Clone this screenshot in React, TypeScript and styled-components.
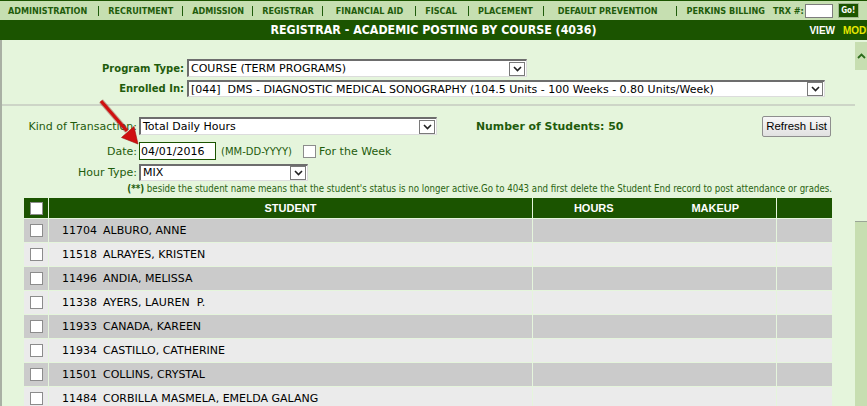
import styled, { createGlobalStyle } from "styled-components";

const DARK = "#1b5400";
const PAGE = "#e5f5dc";
const NAVBG = "#c6dfb1";
const LABEL = "#1f5c0c";

const GlobalStyle = createGlobalStyle`
  html, body { margin: 0; padding: 0; }
  body {
    width: 867px;
    height: 406px;
    overflow: hidden;
    background: ${PAGE};
    font-family: "DejaVu Sans", Verdana, sans-serif;
  }
`;

const navItems = [
  { label: "ADMINISTRATION", lead: 0, trail: 11 },
  { label: "RECRUITMENT", lead: 9, trail: 9 },
  { label: "ADMISSION", lead: 9, trail: 8 },
  { label: "REGISTRAR", lead: 9, trail: 8 },
  { label: "FINANCIAL AID", lead: 13, trail: 12 },
  { label: "FISCAL", lead: 9, trail: 11 },
  { label: "PLACEMENT", lead: 9, trail: 10 },
  { label: "DEFAULT PREVENTION", lead: 14, trail: 18 },
  { label: "PERKINS BILLING", lead: 10, trail: 8 },
];

const students = [
  ["11704", "ALBURO, ANNE"],
  ["11518", "ALRAYES, KRISTEN"],
  ["11496", "ANDIA, MELISSA"],
  ["11338", "AYERS, LAUREN  P."],
  ["11933", "CANADA, KAREEN"],
  ["11934", "CASTILLO, CATHERINE"],
  ["11501", "COLLINS, CRYSTAL"],
  ["11484", "CORBILLA MASMELA, EMELDA GALANG"],
];

const Page = styled.div`
  display: flex;
  flex-direction: column;
  height: 406px;
`;

const TopNav = styled.nav`
  display: flex;
  align-items: center;
  height: 19px;
  border-top: 1px solid ${DARK};
  background: ${NAVBG};
  padding-left: 8px;
  font-family: "DejaVu Sans Condensed", "DejaVu Sans", sans-serif;
  font-stretch: condensed;
  font-weight: bold;
  font-size: 9px;
  color: ${LABEL};
  white-space: nowrap;
`;

const NavItem = styled.span<{ $lead: number; $trail: number }>`
  padding-left: ${(p) => p.$lead}px;
  padding-right: ${(p) => p.$trail}px;
`;

const Divider = styled.span`
  width: 1px;
  height: 10px;
  background: ${LABEL};
`;

const TrxInput = styled.div`
  width: 28px;
  height: 14px;
  box-sizing: border-box;
  margin-left: 1px;
  background: #fff;
  border: 1px solid #7d7d7d;
`;

const GoButton = styled.div`
  width: 21px;
  height: 15px;
  box-sizing: border-box;
  margin-left: 5px;
  background: ${DARK};
  border: 1px solid #9fb890;
  color: #fff;
  font-size: 8px;
  display: flex;
  align-items: center;
  justify-content: center;
`;

const TitleBar = styled.header`
  display: grid;
  grid-template-columns: 1fr auto 1fr;
  align-items: center;
  height: 20px;
  background: ${DARK};
  overflow: hidden;
`;

const Title = styled.h1`
  grid-column: 2;
  margin: 0;
  font-family: "DejaVu Sans Condensed", "DejaVu Sans", sans-serif;
  font-stretch: condensed;
  font-size: 12.3px;
  font-weight: bold;
  color: #fff;
  white-space: nowrap;
`;

/* the reference window clips the right end of "MODE" */
const ViewMode = styled.div`
  justify-self: end;
  display: flex;
  gap: 8px;
  margin-right: -6px;
  font-family: "Liberation Sans", Arial, sans-serif;
  font-weight: bold;
  font-size: 10px;
  color: #fff;
`;

const Mode = styled.span`
  color: #e8e800;
`;

const Body = styled.div`
  flex: 1;
  display: flex;
  min-height: 0;
`;

const Main = styled.main`
  position: relative;
  flex: 1;
  border-left: 2px solid #a9b0a4;
  overflow: hidden;
`;

const ProgramForm = styled.div`
  display: grid;
  grid-template-columns: 182px auto;
  column-gap: 3px;
  row-gap: 3px;
  padding-top: 19px;
  justify-content: start;
`;

const BoldLabel = styled.label`
  align-self: center;
  text-align: right;
  font-weight: bold;
  font-size: 10px;
  color: ${LABEL};
`;

const Rule = styled.hr`
  margin: 7px 0 0;
  height: 2px;
  border: 0;
  background: #cdd5c7;
`;

const PostingForm = styled.div`
  display: flex;
  flex-direction: column;
  padding: 11px 24px 0 0;
`;

const FieldRow = styled.div<{ $top: number }>`
  display: flex;
  align-items: center;
  margin-top: ${(p) => p.$top}px;
  height: 18px;
`;

const FieldLabel = styled.label`
  width: 135px;
  margin-right: 2px;
  text-align: right;
  font-size: 11px;
  color: ${LABEL};
`;

const SelectBox = styled.div<{ $w: number; $h?: number }>`
  width: ${(p) => p.$w}px;
  height: ${(p) => p.$h ?? 18}px;
  box-sizing: border-box;
  display: flex;
  align-items: center;
  background: #fff;
  border-top: 2px solid #6d6d6d;
  border-left: 2px solid #6d6d6d;
  border-right: 1px solid #dcdcdc;
  border-bottom: 1px solid #dcdcdc;
`;

const SelectText = styled.span`
  flex: 1;
  padding-left: 2px;
  font-size: 11px;
  color: #000;
  white-space: pre;
  overflow: hidden;
`;

const DropButton = styled.span`
  width: 16px;
  height: 14px;
  box-sizing: border-box;
  margin-right: 1px;
  display: flex;
  align-items: center;
  justify-content: center;
  background: #fff;
  border: 1px solid #7a7a7a;
`;

const StudentCount = styled.span`
  margin-left: 39px;
  font-weight: bold;
  font-size: 10.9px;
  color: ${LABEL};
`;

const RefreshButton = styled.button`
  margin-left: auto;
  height: 21px;
  padding: 0 3px;
  background: linear-gradient(#f7f7f7, #e1e1e1);
  border: 1px solid #8e8e8e;
  border-radius: 2px;
  font-family: "Liberation Sans", Arial, sans-serif;
  font-size: 11.4px;
  color: #000;
`;

const DateInput = styled.div`
  width: 77px;
  height: 18px;
  box-sizing: border-box;
  display: flex;
  align-items: center;
  padding-left: 1px;
  background: #fff;
  border: 1px solid ${DARK};
  font-size: 11px;
`;

const Hint = styled.span`
  margin-left: 5px;
  font-size: 10px;
  color: ${LABEL};
`;

const Check = styled.span<{ $gap?: number }>`
  width: 13px;
  height: 13px;
  box-sizing: border-box;
  margin-left: ${(p) => p.$gap ?? 0}px;
  background: #fff;
  border: 1px solid #8c8c8c;
`;

const WeekLabel = styled.span`
  margin-left: 3px;
  font-size: 11px;
  color: ${LABEL};
`;

const Note = styled.p`
  margin: 2px 0 0;
  padding-right: 23px;
  line-height: 12px;
  text-align: right;
  font-family: "DejaVu Sans Condensed", "DejaVu Sans", sans-serif;
  font-stretch: condensed;
  font-size: 9.6px;
  color: #2a6312;
  white-space: nowrap;
`;

const Stars = styled.b`
  color: ${LABEL};
`;

const Grid = styled.div`
  display: grid;
  grid-template-columns: 24px 483px 243px 55px;
  grid-auto-rows: 23px;
  grid-template-rows: 20px;
  gap: 1px;
  margin: 3px 0 0 22px;
  width: max-content;
`;

const HeadCell = styled.div`
  display: flex;
  align-items: center;
  justify-content: center;
  background: ${DARK};
  font-family: "Liberation Sans", Arial, sans-serif;
  font-weight: bold;
  font-size: 11px;
  color: #fff;
`;

const HeadHalf = styled.span`
  flex: 1;
  text-align: center;
`;

const Cell = styled.div<{ $odd: boolean }>`
  display: flex;
  align-items: center;
  background: ${(p) => (p.$odd ? "#cbcbcb" : "#ebebeb")};
`;

const CheckCell = styled(Cell)`
  justify-content: center;
`;

const NameCell = styled(Cell)`
  padding-left: 13px;
  font-size: 11px;
  color: #000;
  white-space: pre;
`;

const StudentId = styled.span`
  margin-right: 6px;
`;

const Arrow = styled.svg`
  position: absolute;
  left: 93px;
  top: 58px;
  overflow: visible;
`;

const ScrollBar = styled.div`
  width: 12px;
  display: flex;
  flex-direction: column;
`;

const ScrollUp = styled.div`
  height: 28px;
  margin-top: 2px;
  display: flex;
  align-items: center;
  justify-content: center;
  background: #c7deb1;
`;

const ScrollTrack = styled.div`
  height: 151px;
`;

const ScrollThumb = styled.div`
  flex: 1;
  background: #c7deb1;
  border-top: 1px solid #9aa596;
`;

const Chevron = () => (
  <svg width="9" height="6" viewBox="0 0 9 6">
    <polyline points="1,1 4.5,4.5 8,1" fill="none" stroke="#222" strokeWidth="1.6" />
  </svg>
);

const Select = ({ width, height, value }: { width: number; height?: number; value: string }) => (
  <SelectBox $w={width} $h={height}>
    <SelectText>{value}</SelectText>
    <DropButton>
      <Chevron />
    </DropButton>
  </SelectBox>
);

export default function App() {
  return (
    <>
      <GlobalStyle />
      <Page>
        <TopNav>
          {navItems.map((item, i) => (
            <span key={item.label} style={{ display: "contents" }}>
              {i > 0 && <Divider />}
              <NavItem $lead={item.lead} $trail={item.trail}>
                {item.label}
              </NavItem>
            </span>
          ))}
          <span>TRX #:</span>
          <TrxInput />
          <GoButton>Go!</GoButton>
        </TopNav>

        <TitleBar>
          <Title>REGISTRAR - ACADEMIC POSTING BY COURSE (4036)</Title>
          <ViewMode>
            <span>VIEW</span>
            <Mode>MODE</Mode>
          </ViewMode>
        </TitleBar>

        <Body>
          <Main>
            <ProgramForm>
              <BoldLabel>Program Type:</BoldLabel>
              <Select width={340} value="COURSE (TERM PROGRAMS)" />
              <BoldLabel>Enrolled In:</BoldLabel>
              <Select
                width={638}
                height={17}
                value="[044]  DMS - DIAGNOSTIC MEDICAL SONOGRAPHY (104.5 Units - 100 Weeks - 0.80 Units/Week)"
              />
            </ProgramForm>

            <Rule />

            <PostingForm>
              <FieldRow $top={0}>
                <FieldLabel>Kind of Transaction:</FieldLabel>
                <Select width={298} value="Total Daily Hours" />
                <StudentCount>Number of Students: 50</StudentCount>
                <RefreshButton>Refresh List</RefreshButton>
              </FieldRow>
              <FieldRow $top={7}>
                <FieldLabel>Date:</FieldLabel>
                <DateInput>04/01/2016</DateInput>
                <Hint>(MM-DD-YYYY)</Hint>
                <Check $gap={11} />
                <WeekLabel>For the Week</WeekLabel>
              </FieldRow>
              <FieldRow $top={3}>
                <FieldLabel>Hour Type:</FieldLabel>
                <Select width={169} height={17} value="MIX" />
              </FieldRow>
            </PostingForm>

            <Note>
              <Stars>(**)</Stars> beside the student name means that the student's status is no longer
              active.Go to 4043 and first delete the Student End record to post attendance or grades.
            </Note>

            <Grid>
              <HeadCell>
                <Check />
              </HeadCell>
              <HeadCell>STUDENT</HeadCell>
              <HeadCell>
                <HeadHalf>HOURS</HeadHalf>
                <HeadHalf>MAKEUP</HeadHalf>
              </HeadCell>
              <HeadCell />
              {students.map(([id, name], i) => {
                const odd = i % 2 === 0;
                return (
                  <span key={id} style={{ display: "contents" }}>
                    <CheckCell $odd={odd}>
                      <Check />
                    </CheckCell>
                    <NameCell $odd={odd}>
                      <StudentId>{id}</StudentId>
                      {name}
                    </NameCell>
                    <Cell $odd={odd} />
                    <Cell $odd={odd} />
                  </span>
                );
              })}
            </Grid>

            <Arrow width="50" height="50" viewBox="0 0 50 50">
              <line x1="6" y1="3" x2="32" y2="33" stroke="#7a0a0a" strokeOpacity="0.35" strokeWidth="5" />
              <line x1="6" y1="3" x2="32" y2="33" stroke="#cf1010" strokeWidth="3.2" />
              <polygon points="43,46 39,28.5 26.5,39.5" fill="#cf1010" stroke="#9a0a0a" strokeWidth="0.6" />
            </Arrow>
          </Main>

          <ScrollBar>
            <ScrollUp>
              <svg width="9" height="6" viewBox="0 0 9 6">
                <polyline points="1,5 4.5,1.5 8,5" fill="none" stroke="#2b6a1a" strokeWidth="1.8" />
              </svg>
            </ScrollUp>
            <ScrollTrack />
            <ScrollThumb />
          </ScrollBar>
        </Body>
      </Page>
    </>
  );
}
